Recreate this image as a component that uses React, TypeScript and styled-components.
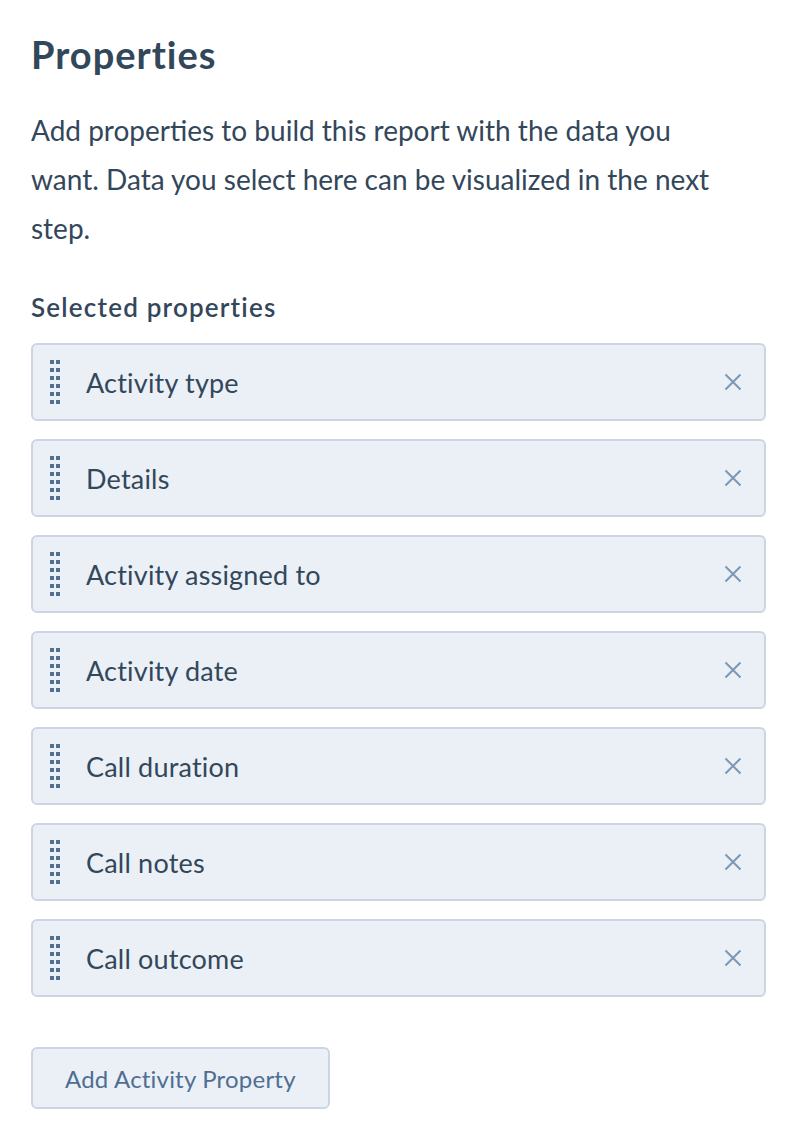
import React from 'react';
import styled, { createGlobalStyle } from 'styled-components';

const GlobalStyle = createGlobalStyle`
  html, body {
    margin: 0;
    padding: 0;
    background: #ffffff;
  }
  body {
    font-family: Lato, "Noto Sans", sans-serif;
    color: #33475b;
  }
`;

const properties = [
  'Activity type',
  'Details',
  'Activity assigned to',
  'Activity date',
  'Call duration',
  'Call notes',
  'Call outcome',
];

const DragHandle: React.FC = () => (
  <Handle>
    {Array.from({ length: 12 }).map((_, i) => (
      <Dot key={i} />
    ))}
  </Handle>
);

const CloseIcon: React.FC = () => (
  <svg width="18" height="18" viewBox="0 0 18 18">
    <path d="M1.5 1.5 L16.5 16.5 M16.5 1.5 L1.5 16.5" stroke="#7c98b6" strokeWidth="2" fill="none" />
  </svg>
);

const App: React.FC = () => {
  return (
    <Page>
      <GlobalStyle />
      <Title>Properties</Title>
      <Description>
        Add properties to build this report with the data you want. Data you select here can be
        visualized in the next step.
      </Description>
      <SectionLabel>Selected properties</SectionLabel>
      <List>
        {properties.map((p) => (
          <Item key={p}>
            <DragHandle />
            <ItemLabel>{p}</ItemLabel>
            <RemoveButton aria-label={`Remove ${p}`}>
              <CloseIcon />
            </RemoveButton>
          </Item>
        ))}
      </List>
      <AddButton>Add Activity Property</AddButton>
    </Page>
  );
};

const Page = styled.div`
  display: flex;
  flex-direction: column;
  align-items: flex-start;
  padding: 26px 28px 0 31px;
`;

const Title = styled.h1`
  margin: 0;
  font-size: 38px;
  font-weight: 700;
  letter-spacing: 1px;
  line-height: 56px;
  color: #33475b;
`;

const Description = styled.p`
  margin: 24px 0 0 0;
  font-size: 28px;
  line-height: 49px;
  color: #33475b;
  max-width: 712px;
`;

const SectionLabel = styled.div`
  margin-top: 38px;
  font-size: 26px;
  font-weight: 600;
  letter-spacing: 1.2px;
  line-height: 32px;
  color: #33475b;
`;

const List = styled.div`
  display: flex;
  flex-direction: column;
  gap: 18px;
  width: 100%;
  margin-top: 20px;
`;

const Item = styled.div`
  display: flex;
  align-items: center;
  height: 78px;
  box-sizing: border-box;
  background: #eaf0f6;
  border: 2px solid #cbd6e2;
  border-radius: 6px;
  padding: 0 22px 0 17px;
`;

const Handle = styled.div`
  display: grid;
  grid-template-columns: repeat(2, 4px);
  grid-auto-rows: 4px;
  column-gap: 2px;
  row-gap: 4px;
`;

const Dot = styled.span`
  background: #516f90;
`;

const ItemLabel = styled.span`
  flex: 1;
  margin-left: 26px;
  font-size: 27px;
  letter-spacing: 0.2px;
  color: #33475b;
`;

const RemoveButton = styled.button`
  display: flex;
  align-items: center;
  justify-content: center;
  border: none;
  background: transparent;
  padding: 0;
  cursor: pointer;
`;

const AddButton = styled.button`
  margin-top: 50px;
  height: 62px;
  padding: 0 32px;
  box-sizing: border-box;
  background: #eaf0f6;
  border: 2px solid #cbd6e2;
  border-radius: 6px;
  font-family: Lato, "Noto Sans", sans-serif;
  font-size: 24px;
  letter-spacing: 0.2px;
  color: #506e91;
  cursor: pointer;
`;

export default App;
